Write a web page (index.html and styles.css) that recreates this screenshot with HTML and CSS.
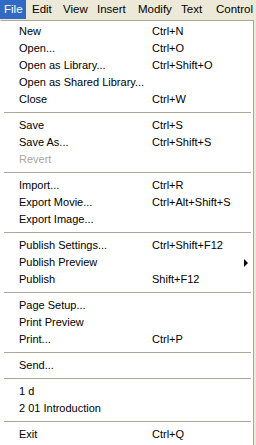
FILE: index.html
```html
<!DOCTYPE html>
<html lang="en">
<head>
    <meta charset="UTF-8">
    <title>File menu</title>
    <link rel="stylesheet" href="styles.css">
</head>
<body>
    <div class="menubar">
        <span class="top active m-file">File</span>
        <span class="top m-edit">Edit</span>
        <span class="top m-view">View</span>
        <span class="top m-insert">Insert</span>
        <span class="top m-modify">Modify</span>
        <span class="top m-text">Text</span>
        <span class="top m-control">Control</span>
    </div>
    <div class="menu">
        <div class="item"><span class="label">New</span><span class="key">Ctrl+N</span></div>
        <div class="item"><span class="label">Open...</span><span class="key">Ctrl+O</span></div>
        <div class="item"><span class="label">Open as Library...</span><span class="key">Ctrl+Shift+O</span></div>
        <div class="item"><span class="label">Open as Shared Library...</span><span class="key"></span></div>
        <div class="item"><span class="label">Close</span><span class="key">Ctrl+W</span></div>
        <div class="sep"></div>
        <div class="item"><span class="label">Save</span><span class="key">Ctrl+S</span></div>
        <div class="item"><span class="label">Save As...</span><span class="key">Ctrl+Shift+S</span></div>
        <div class="item disabled"><span class="label">Revert</span><span class="key"></span></div>
        <div class="sep"></div>
        <div class="item"><span class="label">Import...</span><span class="key">Ctrl+R</span></div>
        <div class="item"><span class="label">Export Movie...</span><span class="key">Ctrl+Alt+Shift+S</span></div>
        <div class="item"><span class="label">Export Image...</span><span class="key"></span></div>
        <div class="sep"></div>
        <div class="item"><span class="label">Publish Settings...</span><span class="key">Ctrl+Shift+F12</span></div>
        <div class="item"><span class="label">Publish Preview</span><span class="key"></span><span class="arrow"></span></div>
        <div class="item"><span class="label">Publish</span><span class="key">Shift+F12</span></div>
        <div class="sep"></div>
        <div class="item"><span class="label">Page Setup...</span><span class="key"></span></div>
        <div class="item"><span class="label">Print Preview</span><span class="key"></span></div>
        <div class="item"><span class="label">Print...</span><span class="key">Ctrl+P</span></div>
        <div class="sep"></div>
        <div class="item"><span class="label">Send...</span><span class="key"></span></div>
        <div class="sep"></div>
        <div class="item"><span class="label">1 d</span><span class="key"></span></div>
        <div class="item"><span class="label">2 01 Introduction</span><span class="key"></span></div>
        <div class="sep"></div>
        <div class="item"><span class="label">Exit</span><span class="key">Ctrl+Q</span></div>
    </div>
</body>
</html>
```

FILE: styles.css
```css
body {
    margin: 0;
    font-family: 'Liberation Sans', Arial, sans-serif;
    font-size: 11px;
    color: #000;
    background-color: #ece9d8;
    width: 256px;
    height: 445px;
    overflow: hidden;
}

.menubar {
    display: flex;
    height: 20px;
    background-color: #ece9d8;
}

.top {
    padding-left: 6px;
    line-height: 19px;
    height: 19px;
    font-size: 11.5px;
    white-space: nowrap;
    box-sizing: border-box;
    flex: none;
}

.top.active {
    background-color: #316ac5;
    color: #fff;
    padding-left: 4px;
}

/* menu bar item widths */
.m-file { width: 26px; }
.m-edit { width: 31px; }
.m-view { width: 34px; }
.m-insert { width: 41px; }
.m-modify { width: 43px; }
.m-text { width: 35px; }
.m-control { width: 46px; }

.menu {
    width: 252px;
    background-color: #fff;
    border: 1px solid #aca899;
    border-left-color: #fff;
    padding: 2px 0 3px 0;
}

.item {
    display: flex;
    height: 17px;
    line-height: 17px;
    padding-left: 18px;
    position: relative;
}

.label {
    width: 133px;
    white-space: nowrap;
}

.key {
    white-space: nowrap;
}

.disabled {
    color: #aca899;
}

/* submenu triangle */
.arrow {
    position: absolute;
    left: 243px;
    top: 5px;
    width: 0;
    height: 0;
    border-top: 4px solid transparent;
    border-bottom: 4px solid transparent;
    border-left: 4px solid #000;
}

.sep {
    height: 1px;
    margin: 4px 2px 4px 3px;
    background-color: #aca899;
}
```
